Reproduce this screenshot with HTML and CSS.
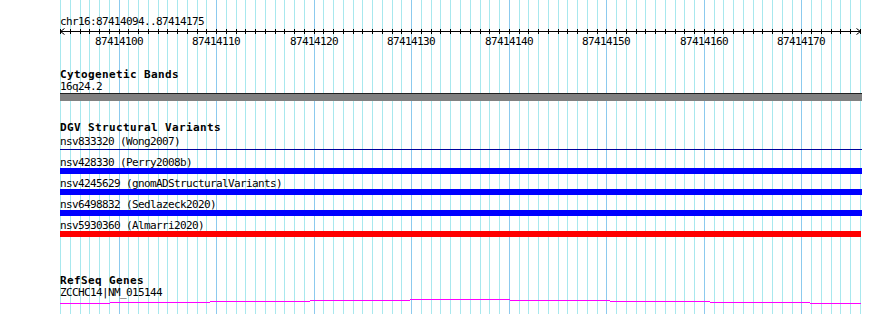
FILE: index.html
```html
<!DOCTYPE html>
<html lang="en">
<head>
    <meta charset="UTF-8">
    <title>chr16:87414094..87414175</title>
    <link rel="stylesheet" href="styles.css">
</head>
<body>
    <div class="panel">
        <!-- base grid, one line per bp, darker every 10 bp -->
        <svg class="grid" width="802" height="314" shape-rendering="crispEdges">
            <path class="grid-minor" d="M0.5 0V314M10.5 0V314M20.5 0V314M29.5 0V314M39.5 0V314M49.5 0V314M68.5 0V314M78.5 0V314M88.5 0V314M98.5 0V314M107.5 0V314M117.5 0V314M127.5 0V314M137.5 0V314M146.5 0V314M166.5 0V314M176.5 0V314M185.5 0V314M195.5 0V314M205.5 0V314M215.5 0V314M224.5 0V314M234.5 0V314M244.5 0V314M263.5 0V314M273.5 0V314M283.5 0V314M293.5 0V314M302.5 0V314M312.5 0V314M322.5 0V314M332.5 0V314M341.5 0V314M361.5 0V314M371.5 0V314M380.5 0V314M390.5 0V314M400.5 0V314M410.5 0V314M420.5 0V314M429.5 0V314M439.5 0V314M459.5 0V314M468.5 0V314M478.5 0V314M488.5 0V314M498.5 0V314M507.5 0V314M517.5 0V314M527.5 0V314M537.5 0V314M556.5 0V314M566.5 0V314M576.5 0V314M585.5 0V314M595.5 0V314M605.5 0V314M615.5 0V314M624.5 0V314M634.5 0V314M654.5 0V314M663.5 0V314M673.5 0V314M683.5 0V314M693.5 0V314M702.5 0V314M712.5 0V314M722.5 0V314M732.5 0V314M751.5 0V314M761.5 0V314M771.5 0V314M780.5 0V314M790.5 0V314M800.5 0V314"/>
            <path class="grid-major" d="M59.5 0V314M156.5 0V314M254.5 0V314M351.5 0V314M449.5 0V314M546.5 0V314M644.5 0V314M741.5 0V314"/>
        </svg>

        <div class="details">
            <div class="locus">chr16:87414094..87414175</div>

            <svg class="ruler" width="802" height="21" shape-rendering="crispEdges">
                <path class="ruler-line" d="M0 4.5H801"/>
                <path class="ruler-line" d="M0.5 2v5M10.5 2v5M20.5 2v5M29.5 2v5M39.5 2v5M49.5 2v5M59.5 2v5M68.5 2v5M78.5 2v5M88.5 2v5M98.5 2v5M107.5 2v5M117.5 2v5M127.5 2v5M137.5 2v5M146.5 2v5M156.5 2v5M166.5 2v5M176.5 2v5M185.5 2v5M195.5 2v5M205.5 2v5M215.5 2v5M224.5 2v5M234.5 2v5M244.5 2v5M254.5 2v5M263.5 2v5M273.5 2v5M283.5 2v5M293.5 2v5M302.5 2v5M312.5 2v5M322.5 2v5M332.5 2v5M341.5 2v5M351.5 2v5M361.5 2v5M371.5 2v5M380.5 2v5M390.5 2v5M400.5 2v5M410.5 2v5M420.5 2v5M429.5 2v5M439.5 2v5M449.5 2v5M459.5 2v5M468.5 2v5M478.5 2v5M488.5 2v5M498.5 2v5M507.5 2v5M517.5 2v5M527.5 2v5M537.5 2v5M546.5 2v5M556.5 2v5M566.5 2v5M576.5 2v5M585.5 2v5M595.5 2v5M605.5 2v5M615.5 2v5M624.5 2v5M634.5 2v5M644.5 2v5M654.5 2v5M663.5 2v5M673.5 2v5M683.5 2v5M693.5 2v5M702.5 2v5M712.5 2v5M722.5 2v5M732.5 2v5M741.5 2v5M751.5 2v5M761.5 2v5M771.5 2v5M780.5 2v5M790.5 2v5M800.5 2v5"/>
                <path class="ruler-arrow" d="M4.5 1.5L0.5 4.5L4.5 7.5M796.5 1.5L800.5 4.5L796.5 7.5"/>
                <text class="ruler-label" x="35" y="18">87414100</text>
                <text class="ruler-label" x="132" y="18">87414110</text>
                <text class="ruler-label" x="230" y="18">87414120</text>
                <text class="ruler-label" x="327" y="18">87414130</text>
                <text class="ruler-label" x="425" y="18">87414140</text>
                <text class="ruler-label" x="522" y="18">87414150</text>
                <text class="ruler-label" x="620" y="18">87414160</text>
                <text class="ruler-label" x="717" y="18">87414170</text>
            </svg>

            <div class="track track-cyto">
                <div class="track-title">Cytogenetic Bands</div>
                <div class="feature-label band-label">16q24.2</div>
                <div class="band"></div>
            </div>

            <div class="track track-dgv">
                <div class="track-title">DGV Structural Variants</div>
                <div class="variants">
                    <div class="variant">
                        <div class="feature-label">nsv833320 (Wong2007)</div>
                        <div class="variant-line"></div>
                    </div>
                    <div class="variant">
                        <div class="feature-label">nsv428330 (Perry2008b)</div>
                        <div class="variant-bar"></div>
                    </div>
                    <div class="variant">
                        <div class="feature-label">nsv4245629 (gnomADStructuralVariants)</div>
                        <div class="variant-bar"></div>
                    </div>
                    <div class="variant">
                        <div class="feature-label">nsv6498832 (Sedlazeck2020)</div>
                        <div class="variant-bar"></div>
                    </div>
                    <div class="variant">
                        <div class="feature-label">nsv5930360 (Almarri2020)</div>
                        <div class="variant-bar variant-loss"></div>
                    </div>
                </div>
            </div>

            <div class="track track-refseq">
                <div class="track-title">RefSeq Genes</div>
                <div class="feature-label gene-label">ZCCHC14|NM_015144</div>
                <svg class="intron" width="802" height="5" shape-rendering="crispEdges">
                    <path d="M0 4.5H50M50 3.5H150M150 2.5H250M250 1.5H350M350 0.5H450M450 1.5H550M550 2.5H650M650 3.5H750M750 4.5H801"/>
                </svg>
            </div>
        </div>
    </div>
</body>
</html>
```

FILE: styles.css
```css
body {
    margin: 0;
    background: #fff;
}

.panel {
    position: relative;
    width: 890px;
    height: 314px;
    overflow: hidden;
    font-family: "DejaVu Sans Mono", "Liberation Mono", monospace;
    font-size: 11px;
    line-height: 11px;
    letter-spacing: -0.62px;
    color: #000;
}

.grid {
    position: absolute;
    top: 0;
    left: 60px;
}

.grid-minor {
    fill: none;
    stroke: #a8e8ee;
    stroke-width: 1;
}

.grid-major {
    fill: none;
    stroke: #8ccaee;
    stroke-width: 1;
}

.details {
    position: relative;
    padding: 16px 0 0 60px;
}

.ruler {
    display: block;
    overflow: visible;
}

.ruler-line,
.ruler-arrow {
    fill: none;
    stroke: #000;
    stroke-width: 1;
}

.ruler-arrow {
    shape-rendering: auto;
}

.ruler-label {
    font-family: "DejaVu Sans Mono", monospace;
    font-size: 11px;
    letter-spacing: -0.62px;
    fill: #000;
}

.track-title {
    font-weight: bold;
    letter-spacing: 0.38px;
}

.track-cyto {
    margin-top: 21px;
}

.band-label {
    margin-top: 1px;
}

.band {
    width: 802px;
    height: 7px;
    margin-top: 1px;
    background: #808080;
    border-top: 1px solid #202020;
}

.track-dgv {
    margin-top: 21px;
}

.variants {
    margin-top: 3px;
}

.variant {
    height: 21px;
}

.variant-line {
    width: 802px;
    height: 1px;
    margin-top: 2px;
    background: #00009c;
}

.variant-bar {
    width: 802px;
    height: 6px;
    background: #0000ff;
}

.variant-loss {
    width: 801px;
    background: #ff0000;
}

.track-refseq {
    margin-top: 34px;
}

.gene-label {
    position: relative;
    z-index: 1;
    height: 12px;
    margin-top: 1px;
    line-height: 12px;
}

.intron {
    display: block;
}

.intron path {
    fill: none;
    stroke: #ff00ff;
    stroke-width: 1;
}
```
